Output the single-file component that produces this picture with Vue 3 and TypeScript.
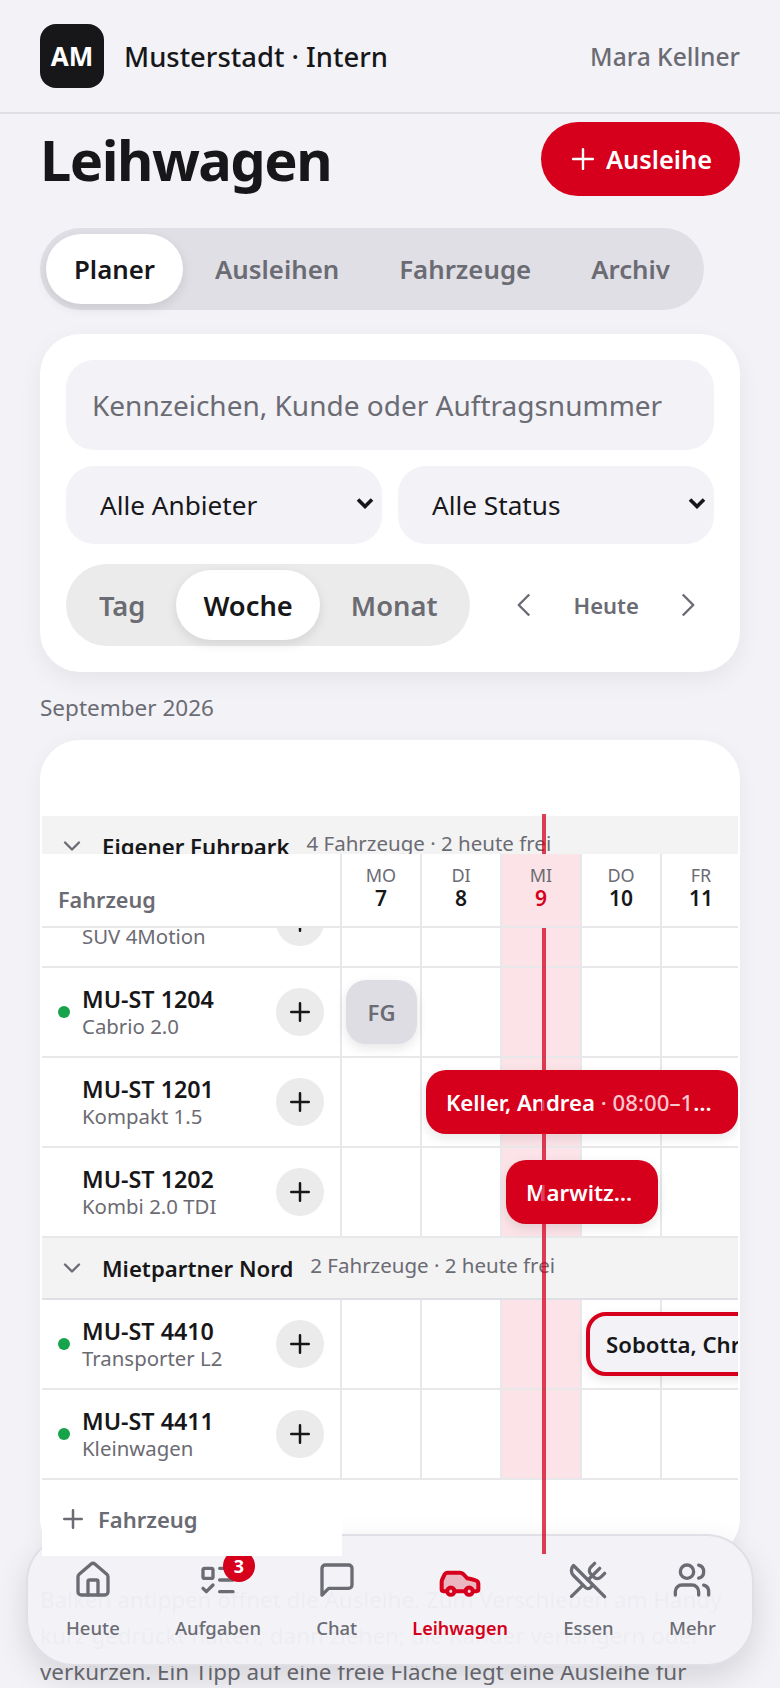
<script setup lang="ts">
import { ref } from 'vue';

const tabs = ['Planer', 'Ausleihen', 'Fahrzeuge', 'Archiv'];
const views = ['Tag', 'Woche', 'Monat'];
const filters = ['Alle Anbieter', 'Alle Status'];
const activeTab = ref('Planer');
const activeView = ref('Woche');

const days = [
  { name: 'MO', num: 7 },
  { name: 'DI', num: 8 },
  { name: 'MI', num: 9, today: true },
  { name: 'DO', num: 10 },
  { name: 'FR', num: 11 },
];

type Row =
  | { kind: 'group'; name: string; info: string }
  | { kind: 'car'; plate: string; model: string; free?: boolean; bar?: string };

const rows: Row[] = [
  { kind: 'group', name: 'Eigener Fuhrpark', info: '4 Fahrzeuge · 2 heute frei' },
  { kind: 'car', plate: 'MU-ST 1203', model: 'SUV 4Motion', free: false },
  { kind: 'car', plate: 'MU-ST 1204', model: 'Cabrio 2.0', free: true, bar: 'fg' },
  { kind: 'car', plate: 'MU-ST 1201', model: 'Kompakt 1.5', bar: 'keller' },
  { kind: 'car', plate: 'MU-ST 1202', model: 'Kombi 2.0 TDI', bar: 'marwitz' },
  { kind: 'group', name: 'Mietpartner Nord', info: '2 Fahrzeuge · 2 heute frei' },
  { kind: 'car', plate: 'MU-ST 4410', model: 'Transporter L2', free: true, bar: 'sobotta' },
  { kind: 'car', plate: 'MU-ST 4411', model: 'Kleinwagen', free: true },
];
</script>

<template>
  <div class="page">
    <header class="topbar">
      <div class="logo">AM</div>
      <div class="brand">Musterstadt · Intern</div>
      <div class="user">Mara Kellner</div>
    </header>

    <main class="content">
      <div class="title-row">
        <h1>Leihwagen</h1>
        <button class="add-btn">
          <svg width="34" height="34" viewBox="0 0 24 24" class="ic thin"><path d="M5 12h14M12 5v14" /></svg>
          Ausleihe
        </button>
      </div>

      <div class="tabs">
        <button
          v-for="t in tabs"
          :key="t"
          class="tab"
          :class="{ on: t === activeTab }"
          @click="activeTab = t"
        >{{ t }}</button>
      </div>

      <section class="filters">
        <input class="search" placeholder="Kennzeichen, Kunde oder Auftragsnummer" />
        <div class="selects">
          <div v-for="f in filters" :key="f" class="select-wrap">
            <select><option>{{ f }}</option></select>
            <svg width="18" height="12" viewBox="0 0 18 12" class="arrow"><path d="M2 2.5 9 9.5l7-7" /></svg>
          </div>
        </div>
        <div class="controls">
          <div class="seg">
            <button
              v-for="v in views"
              :key="v"
              class="seg-btn"
              :class="{ on: v === activeView }"
              @click="activeView = v"
            >{{ v }}</button>
          </div>
          <div class="pager">
            <svg width="42" height="42" viewBox="0 0 24 24" class="ic pager-ic"><path d="m15 18-6-6 6-6" /></svg>
            <span>Heute</span>
            <svg width="42" height="42" viewBox="0 0 24 24" class="ic pager-ic"><path d="m9 18 6-6-6-6" /></svg>
          </div>
        </div>
      </section>

      <div class="month">September 2026</div>

      <section class="planner">
        <div class="grid">
          <div class="head-space"></div>
          <template v-for="row in rows" :key="row.kind === 'group' ? row.name : row.plate">
            <div v-if="row.kind === 'group'" class="group">
              <svg width="28" height="28" viewBox="0 0 24 24" class="ic"><path d="m6 9 6 6 6-6" /></svg>
              <strong>{{ row.name }}</strong>
              <span>{{ row.info }}</span>
            </div>
            <div v-else class="row">
              <div class="car">
                <i class="dot" :class="{ hide: !row.free }"></i>
                <div class="car-text">
                  <b>{{ row.plate }}</b>
                  <small>{{ row.model }}</small>
                </div>
                <button class="plus">
                  <svg width="30" height="30" viewBox="0 0 24 24" class="ic"><path d="M5 12h14M12 5v14" /></svg>
                </button>
              </div>
              <div v-for="d in days" :key="d.num" class="cell" :class="{ today: d.today }"></div>
              <div v-if="row.bar === 'fg'" class="bar fg">FG</div>
              <div v-if="row.bar === 'keller'" class="bar keller"><span>Keller, Andrea <em>· 08:00–18:00</em></span></div>
              <div v-if="row.bar === 'marwitz'" class="bar marwitz"><span>Marwitz…</span></div>
              <div v-if="row.bar === 'sobotta'" class="bar sobotta"><span>Sobotta, Christian</span></div>
            </div>
          </template>
          <div class="grid-foot">
            <svg width="30" height="30" viewBox="0 0 24 24" class="ic"><path d="M5 12h14M12 5v14" /></svg>
            Fahrzeug
          </div>
        </div>

        <div class="head">
          <div class="head-car">Fahrzeug</div>
          <div v-for="d in days" :key="d.num" class="head-day" :class="{ today: d.today }">
            <span>{{ d.name }}</span>
            <b>{{ d.num }}</b>
          </div>
        </div>
        <div class="now"></div>
      </section>

      <p class="hint">
        Balken antippen öffnet die Ausleihe. Zum Verschieben am Handy kurz gedrückt halten, dann
        ziehen; die Ränder verlängern oder verkürzen. Ein Tipp auf eine freie Fläche legt eine
        Ausleihe für dieses Fahrzeug an.
      </p>
    </main>

    <nav class="bottom">
      <a class="nav-item">
        <svg width="40" height="40" viewBox="0 0 24 24" class="ic">
          <path d="M15 21v-8a1 1 0 0 0-1-1h-4a1 1 0 0 0-1 1v8" />
          <path d="M3 10a2 2 0 0 1 .7-1.5l7-6a2 2 0 0 1 2.6 0l7 6a2 2 0 0 1 .7 1.5v9a2 2 0 0 1-2 2H5a2 2 0 0 1-2-2z" />
        </svg>
        Heute
      </a>
      <a class="nav-item">
        <svg width="40" height="40" viewBox="0 0 24 24" class="ic">
          <rect x="3" y="5" width="6" height="6" rx="1" />
          <path d="m3 17 2 2 4-4M13 5h8M13 12h8M13 19h8" />
        </svg>
        <i class="badge">3</i>
        Aufgaben
      </a>
      <a class="nav-item">
        <svg width="40" height="40" viewBox="0 0 24 24" class="ic">
          <path d="M21 15a2 2 0 0 1-2 2H7l-4 4V5a2 2 0 0 1 2-2h14a2 2 0 0 1 2 2z" />
        </svg>
        Chat
      </a>
      <a class="nav-item active">
        <svg width="44" height="44" viewBox="0 0 24 24" class="ic car-ic">
          <path class="fill" d="M19 17h2c.6 0 1-.4 1-1v-3c0-.9-.7-1.7-1.5-1.9C18.7 10.6 16 10 16 10s-1.3-1.4-2.2-2.3c-.5-.4-1.1-.7-1.8-.7H5c-.6 0-1.1.4-1.4.9l-1.4 2.9A3.7 3.7 0 0 0 2 12v4c0 .6.4 1 1 1h2" />
          <circle cx="7" cy="17" r="2" />
          <path d="M9 17h6" />
          <circle cx="17" cy="17" r="2" />
        </svg>
        Leihwagen
      </a>
      <a class="nav-item">
        <svg width="40" height="40" viewBox="0 0 24 24" class="ic">
          <path d="m16 2-2.3 2.3a3 3 0 0 0 0 4.2l1.8 1.8a3 3 0 0 0 4.2 0L22 8" />
          <path d="M15 15 3.3 3.3a4.2 4.2 0 0 0 0 6l7.3 7.3c.7.7 2 .7 2.8 0L15 15Zm0 0 7 7" />
          <path d="m2.1 21.8 6.4-6.3M19 5l-7 7" />
        </svg>
        Essen
      </a>
      <a class="nav-item">
        <svg width="40" height="40" viewBox="0 0 24 24" class="ic">
          <path d="M16 21v-2a4 4 0 0 0-4-4H6a4 4 0 0 0-4 4v2" />
          <circle cx="9" cy="7" r="4" />
          <path d="M22 21v-2a4 4 0 0 0-3-3.87M16 3.13a4 4 0 0 1 0 7.75" />
        </svg>
        Mehr
      </a>
    </nav>
  </div>
</template>

<style>
html, body {
  margin: 0;
  background: #f2f2f7;
}
</style>

<style scoped>
.page {
  position: relative;
  width: 780px;
  height: 1688px;
  overflow: hidden;
  background: #f2f2f7;
  font-family: "Noto Sans", sans-serif;
  color: #17171a;
}
button, input, select {
  font-family: inherit;
  border: 0;
}
.ic {
  fill: none;
  stroke: currentColor;
  stroke-width: 2;
  stroke-linecap: round;
  stroke-linejoin: round;
  flex: none;
}
.ic.thin {
  stroke-width: 1.7;
}

.topbar {
  display: flex;
  align-items: center;
  height: 112px;
  padding: 0 40px;
  border-bottom: 2px solid #dfdfe5;
}
.logo {
  width: 64px;
  height: 64px;
  border-radius: 16px;
  background: #17171a;
  color: #fff;
  font-weight: 700;
  font-size: 26px;
  display: flex;
  align-items: center;
  justify-content: center;
}
.brand {
  margin-left: 20px;
  font-size: 27.4px;
  font-weight: 500;
}
.user {
  margin-left: auto;
  font-size: 24.6px;
  font-weight: 500;
  color: #6b6b73;
}

.content {
  padding: 8px 40px 0;
}
.title-row {
  display: flex;
  justify-content: space-between;
  align-items: center;
  height: 74px;
}
h1 {
  margin: 0;
  font-size: 56px;
  font-weight: 700;
  line-height: 74px;
  letter-spacing: -1.5px;
}
.add-btn {
  display: flex;
  align-items: center;
  gap: 6px;
  height: 74px;
  padding: 0 28px 0 25px;
  border-radius: 37px;
  background: #d6001c;
  color: #fff;
  font-size: 25.4px;
  font-weight: 600;
}

.tabs {
  display: inline-flex;
  gap: 4px;
  margin-top: 32px;
  padding: 6px;
  border-radius: 41px;
  background: #dfdfe5;
  vertical-align: top;
}
.tab {
  height: 70px;
  padding: 0 28px;
  border-radius: 35px;
  background: transparent;
  font-size: 25.8px;
  font-weight: 600;
  color: #6b6b73;
}
.tab.on {
  background: #fff;
  color: #17171a;
  box-shadow: 0 4px 12px rgba(0, 0, 0, 0.1);
}

.filters {
  margin-top: 24px;
  padding: 26px;
  border-radius: 40px;
  background: #fff;
  box-shadow: 0 8px 24px rgba(0, 0, 0, 0.06);
}
.search {
  display: block;
  box-sizing: border-box;
  width: 100%;
  height: 90px;
  padding: 0 26px;
  border-radius: 28px;
  background: #f2f2f7;
  font-size: 28px;
  outline: none;
}
.search::placeholder {
  color: #6b6b73;
}
.selects {
  display: grid;
  grid-template-columns: 1fr 1fr;
  gap: 16px;
  margin-top: 16px;
}
.select-wrap {
  position: relative;
  height: 78px;
}
select {
  appearance: none;
  width: 100%;
  height: 78px;
  padding: 0 0 0 34px;
  border-radius: 28px;
  background: #f2f2f7;
  color: #17171a;
  font-size: 26.2px;
}
.arrow {
  position: absolute;
  top: 31px;
  right: 8px;
  fill: none;
  stroke: #17171a;
  stroke-width: 3.6;
  pointer-events: none;
}
.controls {
  display: flex;
  align-items: center;
  margin-top: 20px;
}
.seg {
  display: flex;
  gap: 4px;
  padding: 6px;
  border-radius: 41px;
  background: #ebebeb;
}
.seg-btn {
  height: 70px;
  padding: 0 27px;
  border-radius: 35px;
  background: transparent;
  font-size: 27.3px;
  font-weight: 600;
  color: #6b6b73;
}
.seg-btn.on {
  background: #fff;
  color: #17171a;
  box-shadow: 0 4px 12px rgba(0, 0, 0, 0.1);
}
.pager {
  flex: 1;
  display: flex;
  align-items: center;
  justify-content: space-between;
  padding: 0 5px 0 33px;
  color: #6b6b73;
}
.pager-ic {
  stroke-width: 1.4;
  stroke-linecap: butt;
}
.pager span {
  font-size: 22px;
  font-weight: 600;
}

.month {
  margin-top: 20px;
  font-size: 22.5px;
  line-height: 32px;
  color: #6b6b73;
}

.planner {
  position: relative;
  margin-top: 16px;
  border: 2px solid #fff;
  border-radius: 40px;
  background: #fff;
  box-shadow: 0 4px 20px rgba(0, 0, 0, 0.05);
}
.grid {
  position: relative;
  overflow: hidden;
}
.head-space {
  height: 74px;
}
.group {
  box-sizing: border-box;
  display: flex;
  align-items: center;
  height: 62px;
  padding-left: 16px;
  background: #f3f3f4;
  border-bottom: 2px solid #dfdfe5;
  color: #6b6b73;
}
.group strong {
  margin-left: 16px;
  font-size: 22.2px;
  font-weight: 600;
  color: #17171a;
}
.group span {
  margin-left: 17px;
  margin-top: -6px;
  font-size: 20.5px;
  color: #6b6b73;
}
.row {
  position: relative;
  display: flex;
  height: 90px;
}
.car {
  box-sizing: border-box;
  flex: none;
  width: 300px;
  display: flex;
  align-items: center;
  padding: 0 16px;
  border-right: 2px solid #e8e8ea;
  border-bottom: 2px solid #e8e8ea;
}
.dot {
  width: 12px;
  height: 12px;
  border-radius: 50%;
  background: #16a34a;
  flex: none;
}
.dot.hide {
  visibility: hidden;
}
.car-text {
  flex: 1;
  display: flex;
  flex-direction: column;
  margin-left: 12px;
  min-width: 0;
}
.car-text b {
  font-size: 23.3px;
  font-weight: 600;
  line-height: 28px;
}
.car-text small {
  font-size: 20.4px;
  line-height: 26px;
  color: #6b6b73;
}
.plus {
  width: 48px;
  height: 48px;
  border-radius: 50%;
  padding: 0;
  background: #ebebeb;
  color: #17171a;
  display: flex;
  align-items: center;
  justify-content: center;
}
.cell {
  box-sizing: border-box;
  flex: none;
  width: 80px;
  border-right: 2px solid #e8e8ea;
  border-bottom: 2px solid #e8e8ea;
}
.cell.today {
  background: #fbe3e7;
}
.bar {
  position: absolute;
  top: 12px;
  height: 64px;
  box-sizing: border-box;
  display: flex;
  align-items: center;
  padding: 0 20px;
  border-radius: 20px;
  background: #d6001c;
  color: #fff;
  font-size: 22.2px;
  font-weight: 600;
  box-shadow: 0 4px 12px rgba(0, 0, 0, 0.1);
  white-space: nowrap;
  overflow: hidden;
}
.bar span {
  overflow: hidden;
  text-overflow: ellipsis;
}
.bar em {
  font-style: normal;
  font-weight: 500;
  color: #f9c6cd;
}
.bar.fg {
  left: 304px;
  width: 71px;
  justify-content: center;
  padding: 0;
  background: #dddde3;
  color: #6b6b73;
}
.bar.keller {
  left: 384px;
  width: 312px;
}
.bar.marwitz {
  left: 464px;
  width: 152px;
}
.bar.sobotta {
  left: 544px;
  width: 260px;
  border: 4px solid #d6001c;
  background: #f2f2f7;
  color: #17171a;
  padding-left: 16px;
}
.grid-foot {
  position: relative;
  z-index: 20;
  box-sizing: border-box;
  display: flex;
  align-items: center;
  gap: 10px;
  width: 300px;
  height: 76px;
  padding: 2px 0 0 16px;
  background: #fff;
  font-size: 22px;
  font-weight: 600;
  color: #6b6b73;
}

.head {
  position: absolute;
  top: 112px;
  left: 0;
  right: 0;
  height: 74px;
  z-index: 30;
  display: flex;
  overflow: hidden;
  background: #fff;
  box-sizing: border-box;
  border-bottom: 2px solid #e8e8ea;
}
.head-car {
  box-sizing: border-box;
  flex: none;
  width: 300px;
  padding: 31px 0 0 16px;
  border-right: 2px solid #e8e8ea;
  font-size: 21.6px;
  font-weight: 600;
  color: #6b6b73;
}
.head-day {
  box-sizing: border-box;
  flex: none;
  width: 80px;
  display: flex;
  flex-direction: column;
  align-items: center;
  padding-top: 10px;
  border-right: 2px solid #e8e8ea;
  font-size: 18px;
  line-height: 22px;
  color: #6b6b73;
}
.head-day b {
  font-size: 21px;
  line-height: 24px;
  font-weight: 600;
  color: #17171a;
}
.head-day.today {
  background: #fbe3e7;
}
.head-day.today b {
  color: #d6001c;
}
.now {
  position: absolute;
  left: 500px;
  top: 72px;
  bottom: 2px;
  width: 4px;
  background: rgba(214, 0, 28, 0.75);
  z-index: 25;
  pointer-events: none;
}

.hint {
  margin: 24px 0 0;
  font-size: 22.4px;
  line-height: 36px;
  color: #6b6b73;
}

.bottom {
  position: absolute;
  z-index: 10;
  left: 26px;
  right: 26px;
  top: 1534px;
  height: 132px;
  box-sizing: border-box;
  display: flex;
  justify-content: space-between;
  padding: 24px 36px 0 38px;
  border: 2px solid #dfdfe5;
  border-radius: 48px;
  background: rgba(242, 242, 247, 0.96);
  box-shadow: 0 12px 32px rgba(0, 0, 0, 0.12);
}
.nav-item {
  position: relative;
  display: flex;
  flex-direction: column;
  align-items: center;
  gap: 16px;
  font-size: 18.5px;
  line-height: 24px;
  font-weight: 500;
  color: #6b6b73;
}
.nav-item.active {
  color: #d6001c;
  font-size: 18px;
  font-weight: 600;
}
.car-ic {
  stroke-width: 2.2;
  margin: 0 -2px -4px;
}
.car-ic .fill {
  fill: rgba(214, 0, 28, 0.25);
}
.badge {
  position: absolute;
  top: -10px;
  left: 48px;
  width: 32px;
  height: 32px;
  border-radius: 50%;
  background: #d6001c;
  color: #fff;
  font-style: normal;
  font-weight: 700;
  font-size: 18px;
  line-height: 32px;
  display: flex;
  align-items: center;
  justify-content: center;
}
</style>
